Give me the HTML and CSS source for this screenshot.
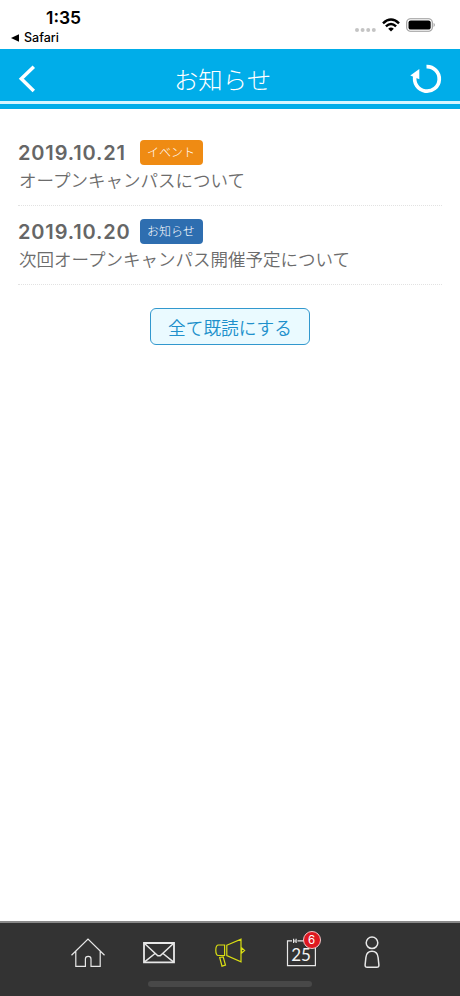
FILE: index.html
```html
<!DOCTYPE html>
<html lang="ja">
<head>
<meta charset="utf-8">
<title>お知らせ</title>
<link rel="stylesheet" href="styles.css">
</head>
<body>
<div class="screen">
  <div class="status">
    <div class="status-left">
      <div class="time">1:35</div>
      <div class="return"><svg width="8" height="8" viewBox="0 0 8 8"><path d="M0 4L8 .2V7.8Z"/></svg><span>Safari</span></div>
    </div>
    <div class="status-right">
      <svg class="dots" width="21" height="4" viewBox="0 0 21 4"><circle cx="2" cy="2" r="2"/><circle cx="7.6" cy="2" r="2"/><circle cx="13.2" cy="2" r="2"/><circle cx="18.8" cy="2" r="2"/></svg>
      <svg class="wifi" width="18" height="14" viewBox="0 0 18 14"><path d="M1 5.3Q9-2.2 17 5.3M3.9 8.3Q9 3.6 14.1 8.3" fill="none" stroke="#000" stroke-width="2.5"/><path d="M6.2 10.7Q9 8.2 11.8 10.7L9 13.5Z"/></svg>
      <svg class="battery" width="30" height="14" viewBox="0 0 30 14"><rect x=".7" y=".7" width="25.6" height="12.6" rx="3.7" fill="none" stroke="#999" stroke-width="1.1"/><rect x="2.5" y="2.4" width="22.2" height="9.2" rx="2.2"/><path d="M27.6 4.8Q30 7 27.6 9.2Z" fill="#999"/></svg>
    </div>
  </div>
  <header class="header">
    <div class="header-row">
      <svg width="18" height="28" viewBox="0 0 18 28"><path d="M15.8 1.8L3.3 13.8L15.8 26" fill="none" stroke="#fff" stroke-width="3.5"/></svg>
      <h1>お知らせ</h1>
      <svg width="32" height="30" viewBox="0 0 32 30"><path d="M16.5 2.6A12.3 12.3 0 1 1 5 12" fill="none" stroke="#fff" stroke-width="3.7"/><path d="M.3 11.5L9.3 5V15.3Z" fill="#fff"/></svg>
    </div>
    <div class="header-line"></div>
  </header>
  <main>
    <article class="item">
      <div class="meta"><time>2019.10.21</time><span class="tag event">イベント</span></div>
      <p>オープンキャンパスについて</p>
    </article>
    <article class="item">
      <div class="meta"><time>2019.10.20</time><span class="tag news">お知らせ</span></div>
      <p>次回オープンキャンパス開催予定について</p>
    </article>
    <button class="read-all">全て既読にする</button>
  </main>
  <nav class="tabs">
    <div class="tab-row">
      <div class="tab"><svg viewBox="68 932 40 40"><path d="M71.5 955.3L88 939L104.5 955.3M75.8 951.5V966.3H85.4V959Q85.4 956.3 88.2 956.3Q91 956.3 91 959V966.3H100.2V951.5"/></svg></div>
      <div class="tab"><svg viewBox="139 932 40 40"><path stroke-width="1.8" d="M144 943H174V962.3H144Z"/><path stroke-width="1.5" d="M144 943L157.8 955.8H160.2L174 943M144 962.3L155 953.5M174 962.3L163 953.5"/></svg></div>
      <div class="tab active"><svg viewBox="210 932 40 40"><path d="M224.6 945H218.5Q215.8 945 215.8 950.3T218.5 955.5H224.6ZM226.8 945.2L241 939.2V961.8L226.8 955.5ZM241.5 947.8L244.6 950.5L241.5 953.2ZM219.7 957.5L222 966.2L225.5 965.2L223.2 957Z"/></svg></div>
      <div class="tab calendar"><svg viewBox="281 932 40 40"><path d="M292 940.8H287.5V965.6H315.4V940.8H297.5M293.6 938.8V943M296.1 938.8V943M293.6 941H296.1"/></svg><span class="day">25</span><span class="badge">6</span></div>
      <div class="tab"><svg viewBox="352 932 40 40"><g stroke-width="1.5"><circle cx="372" cy="942.8" r="5.8"/><path d="M367.2 967.3Q365 967.3 365.1 965L365.9 957.5Q366.5 951.3 372 951.3T378.1 957.5L378.9 965Q379 967.3 376.8 967.3Z"/></g></svg></div>
    </div>
    <div class="home-indicator"></div>
  </nav>
</div>
</body>
</html>
```
FILE: styles.css
```css
* { box-sizing: border-box; }
body { margin: 0; background: #fff; font-family: "Noto Sans CJK JP", sans-serif; font-weight: 300; }
h1, p { margin: 0; font-weight: 300; }
svg { display: block; flex: none; }
.screen { width: 460px; height: 996px; display: flex; flex-direction: column; }
.status { height: 49px; flex: none; display: flex; justify-content: space-between; font-family: Inter, sans-serif; color: #000; }
.status-left { padding: 8px 0 0 11px; }
.time { padding-left: 35px; font-size: 17.5px; line-height: 20px; font-weight: 600; }
.return { display: flex; align-items: center; gap: 5px; margin-top: 2px; font-size: 12.5px; line-height: 16px; font-weight: 500; }
.status-right { display: flex; padding: 18px 24px 0 0; }
.dots { margin: 10px 6px 0 0; fill: #c4c4c4; }
.wifi { margin-right: 6px; }
.header { height: 60px; flex: none; background: #00ade9; }
.header-row { height: 52px; padding: 8px 18px 0; display: flex; align-items: center; justify-content: space-between; }
.header h1 { margin-right: 1px; color: #fff; font-size: 24.4px; line-height: 36px; }
.header-line { height: 3px; background: #d5f5ff; }
main { flex: 1; padding: 18px 18px 0; }
.item { height: 79px; padding-top: 12px; border-bottom: 1px dotted #e2e2e2; color: #6c6c6c; }
.meta { display: flex; align-items: center; height: 26px; }
time { width: 122px; padding-top: 1px; color: #666; font-family: Inter, sans-serif; font-size: 20px; line-height: 26px; font-weight: 600; letter-spacing: .85px; }
.tag { width: 63px; height: 25px; padding-right: 1px; border-radius: 4px; color: #fff; font-size: 12px; line-height: 24px; text-align: center; }
.event { background: #ef8b13; }
.news { background: #2e6eb0; }
.item p { padding: 1px 0 0 1px; font-size: 17.5px; line-height: 28px; font-weight: 350; white-space: nowrap; }
.read-all { display: block; width: 160px; height: 37px; margin: 23px auto 0; padding: 0; border: 1px solid #3298ce; border-radius: 6px; background: #eafaff; color: #2090cb; font: 350 17.7px/34px "Noto Sans CJK JP", sans-serif; }
.tabs { height: 75px; flex: none; border-top: 2px solid #8a8a8a; background: #333; }
.tab-row { display: flex; justify-content: center; padding-top: 9px; }
.tab { width: 71px; display: flex; justify-content: center; position: relative; }
.tab svg { width: 40px; height: 40px; fill: none; stroke: #e8e8e8; stroke-width: 1.2; }
.tab.active svg { stroke: #d9de13; }
.day { position: absolute; top: 16px; left: 0; width: 71px; text-align: center; color: #f4f4f4; font: 400 17px/13px Lato, sans-serif; }
.badge { position: absolute; top: -1px; left: 37px; width: 18px; height: 18px; padding-top: 3px; border: 1px solid #f3c5c7; border-radius: 50%; background: #df1820; color: #fff; text-align: center; font: 400 11.5px/10px Inter, sans-serif; }
.home-indicator { width: 164px; height: 6px; margin: 9px auto 0; border-radius: 3px; background: #484848; }
```
